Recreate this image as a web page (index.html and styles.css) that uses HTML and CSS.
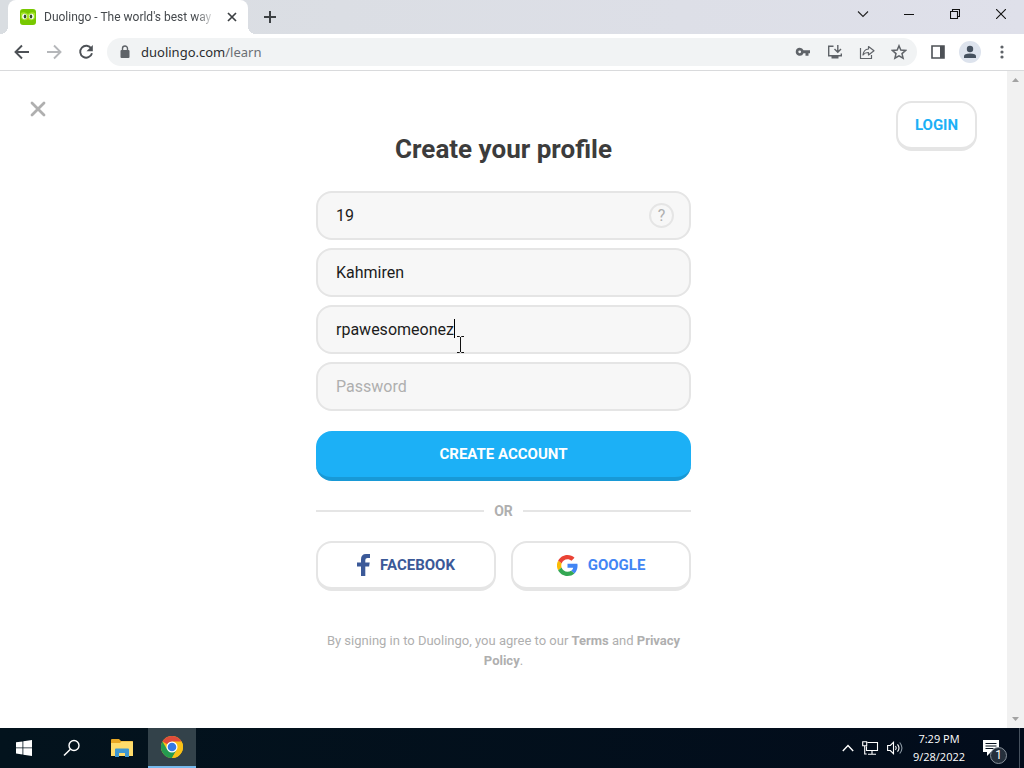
FILE: index.html
```html
<!DOCTYPE html>
<html lang="en">
<head>
<meta charset="utf-8">
<title>Duolingo - The world's best way to learn a language</title>
<link rel="stylesheet" href="styles.css">
</head>
<body>
<div class="tab-strip">
  <div class="tab">
    <svg class="favicon" width="16" height="16" viewBox="0 0 16 16"><rect width="16" height="16" rx="3" fill="#78c800"/><path d="M1 4q3.500-2 7 1 3.500-3 7-1v5q-3 4-7 1-4 3-7-1z" fill="#a5e52b"/><ellipse cx="4.500" cy="7.500" rx="2.300" ry="2.800" fill="#fff"/><ellipse cx="11.500" cy="7.500" rx="2.300" ry="2.800" fill="#fff"/><ellipse cx="5" cy="7.500" rx="1.300" ry="1.900" fill="#35502a"/><ellipse cx="11" cy="7.500" rx="1.300" ry="1.900" fill="#35502a"/><path d="M7 9.500h2L8 11z" fill="#f49000"/></svg>
    <span class="tab-title">Duolingo - The world's best way</span>
    <button class="icon-button" aria-label="Close tab"><svg width="10" height="10" viewBox="0 0 10 10"><path d="M1 1l8 8M9 1L1 9" stroke="#3c4043" stroke-width="1.700"/></svg></button>
  </div>
  <button class="icon-button new-tab" aria-label="New tab"><svg width="12" height="12" viewBox="0 0 12 12"><path d="M6 0v12M0 6h12" stroke="#3c4043" stroke-width="2"/></svg></button>
  <div class="window-controls">
    <button class="icon-button" aria-label="Search tabs"><svg width="12" height="12" viewBox="0 0 12 12"><path d="M1 3.500l5 5 5-5" fill="none" stroke="#222" stroke-width="1.100"/></svg></button>
    <button class="icon-button" aria-label="Minimize"><svg width="10" height="12" viewBox="0 0 10 12"><path d="M0 6.500h10" stroke="#111"/></svg></button>
    <button class="icon-button" aria-label="Restore"><svg width="10" height="10" viewBox="0 0 10 10"><path d="M.5 2.500h7v7h-7zM2.500 2.500v-2h7v7h-2" fill="none" stroke="#111" stroke-width="1.100"/></svg></button>
    <button class="icon-button" aria-label="Close"><svg width="10" height="10" viewBox="0 0 10 10"><path d="M0 0l10 10M10 0L0 10" stroke="#111" stroke-width="1.100"/></svg></button>
  </div>
</div>

<div class="toolbar">
  <div class="nav">
    <button class="icon-button" aria-label="Back"><svg width="16" height="16" viewBox="0 0 16 16"><path d="M15 8H2M8 1.500L1.500 8 8 14.500" fill="none" stroke="#4d5156" stroke-width="1.900"/></svg></button>
    <button class="icon-button" aria-label="Forward"><svg width="16" height="16" viewBox="0 0 16 16"><path d="M1 8h13M8 1.500L14.500 8 8 14.500" fill="none" stroke="#b5b7ba" stroke-width="1.900"/></svg></button>
    <button class="icon-button" aria-label="Reload"><svg width="16" height="16" viewBox="0 0 16 16"><path d="M13.300 4.500A6 6 0 1 0 14 9.300" fill="none" stroke="#4d5156" stroke-width="1.900"/><path d="M14.800 1v6.300H8.500z" fill="#4d5156"/></svg></button>
  </div>
  <div class="omnibox">
    <svg width="16" height="16" viewBox="0 0 16 16"><rect x="3.500" y="6" width="9" height="8" rx="1" fill="#5f6368"/><path d="M5.500 6V4.500a2.500 2.500 0 0 1 5 0V6" fill="none" stroke="#5f6368" stroke-width="1.400"/></svg>
    <span class="url">duolingo.com<span class="url-path">/learn</span></span>
    <button class="icon-button" aria-label="Passwords"><svg width="16" height="16" viewBox="0 0 16 16"><path fill-rule="evenodd" d="M4.700 3.800a4 4 0 1 0 3.800 5.400h2v2.500h3V9.200H15V6.300H8.500a4 4 0 0 0-3.800-2.500zm0 2.600a1.400 1.400 0 1 1 0 2.800 1.400 1.400 0 0 1 0-2.800z" fill="#5f6368"/></svg></button>
    <button class="icon-button" aria-label="Install"><svg width="16" height="16" viewBox="0 0 16 16"><path d="M6.500 2.200H1.700v9.600h12.600V9.500M10.800 1v7M7.500 5l3.300 3.300L14 5" fill="none" stroke="#5f6368" stroke-width="1.400"/><path d="M4.500 12h7v2.500h-7z" fill="#5f6368"/></svg></button>
    <button class="icon-button" aria-label="Share"><svg width="16" height="16" viewBox="0 0 16 16"><path d="M1.500 4v10.500h11V11M9.500 2.500L15 6.700 9.500 11V8.500Q6 8.300 4 11q.5-5.500 5.500-6z" fill="none" stroke="#5f6368" stroke-width="1.200" stroke-linejoin="round"/></svg></button>
    <button class="icon-button" aria-label="Bookmark"><svg width="16" height="16" viewBox="0 0 16 16"><path d="M8 1.800l1.800 4.300 4.700.4L11 9.600l1.100 4.600L8 11.800l-4.100 2.400L5 9.600 1.500 6.500l4.700-.4z" fill="none" stroke="#5f6368" stroke-width="1.500"/></svg></button>
  </div>
  <button class="icon-button" aria-label="Side panel"><svg width="16" height="16" viewBox="0 0 16 16"><path d="M2 2h12v12H2z" fill="none" stroke="#4d5156" stroke-width="1.600"/><path d="M10 2h4v12h-4z" fill="#4d5156"/></svg></button>
  <button class="icon-button" aria-label="Account"><svg width="22" height="22" viewBox="0 0 22 22"><circle cx="11" cy="11" r="11" fill="#dde3ed"/><circle cx="11" cy="8" r="3.200" fill="#45515f"/><path d="M5 17v-1.800q0-2.700 6-2.700t6 2.700V17z" fill="#45515f"/></svg></button>
  <button class="icon-button" aria-label="Menu"><svg width="16" height="16" viewBox="0 0 16 16"><g fill="#5f6368"><circle cx="8" cy="3" r="1.600"/><circle cx="8" cy="8" r="1.600"/><circle cx="8" cy="13" r="1.600"/></g></svg></button>
</div>

<div class="viewport">
  <main class="page">
    <button class="icon-button dismiss" aria-label="Close"><svg width="16" height="16" viewBox="0 0 16 16"><path d="M2 2l12 12M14 2L2 14" stroke="#afafaf" stroke-width="2.800" stroke-linecap="round"/></svg></button>
    <form class="signup">
      <h1 class="heading">Create your profile</h1>
      <div class="fields">
        <div class="field">
          <input class="input" type="text" value="19" aria-label="Age">
          <button class="help" type="button" aria-label="Why age is needed">?</button>
        </div>
        <div class="field"><input class="input" type="text" value="Kahmiren" aria-label="Name"></div>
        <div class="field">
          <input class="input" type="text" value="rpawesomeonez" aria-label="Email">
          <span class="caret"></span>
          <svg class="pointer" width="9" height="17" viewBox="0 0 9 17"><path d="M1 .5h2.500l1 1 1-1H8M4.500 1v15M1 16.500h2.500l1-1 1 1H8" fill="none" stroke="#111"/></svg>
        </div>
        <div class="field"><input class="input" type="password" placeholder="Password" aria-label="Password"></div>
      </div>
      <button class="button primary" type="button">CREATE ACCOUNT</button>
      <div class="divider">OR</div>
      <div class="social">
        <button class="button facebook" type="button"><svg width="13" height="22" viewBox="0 0 13 22"><path d="M4 22V12.500H0V8.500h4V5.500Q4 0 9 0h4v4h-2.500Q8.300 4 8.300 6v2.500h4.400l-.6 4H8.300V22z" fill="#3b5998"/></svg>FACEBOOK</button>
        <button class="button google" type="button"><svg width="21" height="21" viewBox="0 0 48 48"><path fill="#ea4335" d="M24 9.500c3.540 0 6.710 1.220 9.210 3.600l6.850-6.850C35.900 2.380 30.470 0 24 0 14.620 0 6.510 5.380 2.560 13.220l7.980 6.190C12.430 13.720 17.740 9.500 24 9.500z"/><path fill="#4285f4" d="M46.980 24.550c0-1.570-.15-3.090-.38-4.550H24v9.020h12.940c-.58 2.960-2.260 5.480-4.780 7.180l7.730 6c4.510-4.180 7.090-10.360 7.090-17.650z"/><path fill="#fbbc05" d="M10.530 28.590a14.500 14.500 0 0 1 0-9.180l-7.980-6.190a24 24 0 0 0 0 21.560z"/><path fill="#34a853" d="M24 48c6.480 0 11.930-2.130 15.890-5.810l-7.730-6c-2.150 1.450-4.920 2.300-8.160 2.300-6.260 0-11.570-4.220-13.470-9.910l-7.980 6.190C6.510 42.620 14.620 48 24 48z"/></svg>GOOGLE</button>
      </div>
      <p class="legal">By signing in to Duolingo, you agree to our <a href="#terms">Terms</a> and <a href="#privacy">Privacy Policy</a>.</p>
    </form>
    <button class="button login">LOGIN</button>
  </main>
  <div class="scrollbar">
    <svg width="7" height="4" viewBox="0 0 7 4"><path d="M0 4l3.500-4L7 4z" fill="#a3a3a3"/></svg>
    <svg width="7" height="4" viewBox="0 0 7 4"><path d="M0 0l3.500 4L7 0z" fill="#a3a3a3"/></svg>
  </div>
</div>

<footer class="taskbar">
  <button class="task" aria-label="Start"><svg width="16" height="16" viewBox="0 0 16 16"><path d="M0 2.300L6.500 1.400v6.100H0zM7.300 1.300L16 0v7.500H7.300zM0 8.300h6.500v6.200L0 13.600zM7.300 8.300H16V16l-8.700-1.300z" fill="#fff"/></svg></button>
  <button class="task" aria-label="Search"><svg width="18" height="18" viewBox="0 0 18 18"><circle cx="11" cy="6.500" r="5" fill="none" stroke="#fff" stroke-width="1.400"/><path d="M7.400 10.200L1 16.500" stroke="#fff" stroke-width="1.500"/></svg></button>
  <button class="task explorer" aria-label="File Explorer"><svg width="22" height="18" viewBox="0 0 22 18"><path d="M0 1q0-1 1-1h7l2 2h11q1 0 1 1v14H0z" fill="#e9a825"/><path d="M0 4h9l1.500-1.500H22V17H0z" fill="#ffdc6b"/><path d="M4 18V10.500q0-1 1-1h12q1 0 1 1V18h-4v-4H8v4z" fill="#3e97d1"/></svg></button>
  <button class="task task-active" aria-label="Google Chrome"><svg width="22" height="22" viewBox="0 0 22 22"><circle cx="11" cy="11" r="11" fill="#fbc116"/><path d="M11 11L1.470 5.500A11 11 0 0 1 20.530 5.500z" fill="#df4b3b"/><path d="M1.470 5.500A11 11 0 0 0 11 22l4.700-8.200L11 11l-4.700 2.700z" fill="#259b50"/><path d="M11 5.500h9.530A11 11 0 0 1 11 22l4.800-8.200z" fill="#fbc116"/><circle cx="11" cy="11" r="5.500" fill="#fff"/><circle cx="11" cy="11" r="4.300" fill="#3478e5"/></svg></button>
  <div class="tray">
    <svg width="12" height="8" viewBox="0 0 12 8"><path d="M.8 7L6 1.500 11.200 7" fill="none" stroke="#fff" stroke-width="1.400"/></svg>
    <svg width="17" height="14" viewBox="0 0 17 14"><path d="M5.500 1.500h10v8h-11V5.500M10 9.500v3.500M6 13.300h8M.7.700h4v4h-4zM2.700 5v8h2" fill="none" stroke="#fff" stroke-width="1.100"/></svg>
    <svg width="16" height="14" viewBox="0 0 16 14"><path d="M.6 4.500h2.700L6.500 1.300v11.400L3.300 9.500H.6z" fill="none" stroke="#fff" stroke-width="1.100"/><path d="M8.500 5q1.500 2 0 4M10.500 3.300q3 3.700 0 7.400" fill="none" stroke="#fff" stroke-width="1.100"/><path d="M12.700 1.500q4.500 5.500 0 11" fill="none" stroke="#8b98a3" stroke-width="1.100"/></svg>
    <time class="clock">7:29 PM<br>9/28/2022</time>
    <button class="notifications" aria-label="Notifications"><svg width="16" height="16" viewBox="0 0 16 16"><path d="M0 0h16v12H8l-4 4v-4H0z" fill="#fff"/><path d="M2.500 3.500h11M2.500 6h11M2.500 8.500h8" stroke="#07121f"/></svg><span class="badge">1</span></button>
  </div>
</footer>
</body>
</html>
```
FILE: styles.css
```css
* { box-sizing: border-box; }

body {
  margin: 0;
  min-height: 100vh;
  display: flex;
  flex-direction: column;
  background: #fff;
  font-family: Roboto, "Liberation Sans", sans-serif;
}

button {
  border: 0;
  padding: 0;
  background: none;
  font-family: inherit;
  cursor: pointer;
}

svg { display: block; flex: none; }

.icon-button {
  display: flex;
  align-items: center;
  justify-content: center;
  min-width: 16px;
  min-height: 16px;
}

/* Browser frame */
.tab-strip {
  display: flex;
  height: 34px;
  padding-left: 8px;
  background: linear-gradient(90deg, #d9dde1, #dfe0ea);
}

.tab {
  position: relative;
  display: flex;
  align-items: center;
  gap: 8px;
  width: 240px;
  padding: 0 8px 0 12px;
  border-radius: 8px 8px 0 0;
  background: #fff;
}

.tab::before,
.tab::after {
  content: "";
  position: absolute;
  bottom: 0;
  width: 8px;
  height: 8px;
}

.tab::before {
  left: -8px;
  background: radial-gradient(circle at 0 0, transparent 8px, #fff 8px);
}

.tab::after {
  right: -8px;
  background: radial-gradient(circle at 100% 0, transparent 8px, #fff 8px);
}

.tab-title {
  flex: 1;
  white-space: nowrap;
  font-size: 12px;
  color: #45494d;
  -webkit-mask-image: linear-gradient(90deg, #000 88%, transparent);
  mask-image: linear-gradient(90deg, #000 88%, transparent);
}

.new-tab { width: 44px; }

.window-controls {
  display: flex;
  margin-left: auto;
  padding-bottom: 6px;
}

.window-controls .icon-button { width: 46px; }

.toolbar {
  display: flex;
  align-items: center;
  gap: 13px;
  height: 37px;
  padding: 0 14px;
  border-bottom: 1px solid #d9dadc;
}

.nav { display: flex; gap: 16px; }

.omnibox {
  flex: 1;
  display: flex;
  align-items: center;
  gap: 16px;
  height: 28px;
  padding: 0 10px;
  border-radius: 14px;
  background: #f1f3f4;
}

.url {
  flex: 1;
  margin-left: -8px;
  font-family: "Noto Sans", sans-serif;
  font-size: 13px;
  color: #2b2d30;
}

.url-path { color: #6b6f74; }

/* Page */
.viewport { flex: 1; display: flex; }

.page {
  flex: 1;
  display: grid;
  grid-template-columns: 1fr minmax(0, 375px) 1fr;
  align-items: start;
  padding: 30px 30px 0;
}

.dismiss { justify-self: start; }

.scrollbar {
  display: flex;
  flex-direction: column;
  justify-content: space-between;
  align-items: center;
  width: 17px;
  padding: 7px 0;
  background: #f1f1f1;
}

.heading {
  margin: 33px 0 27px;
  font-size: 26px;
  line-height: 30px;
  font-weight: 700;
  text-align: center;
  color: #3c3c3c;
}

.fields {
  display: flex;
  flex-direction: column;
  gap: 8px;
  margin-bottom: 20px;
}

.field { position: relative; }

.input {
  display: block;
  width: 100%;
  height: 49px;
  padding: 0 18px;
  border: 2px solid #e5e5e5;
  border-radius: 16px;
  background: #f7f7f7;
  font: 16px Roboto, sans-serif;
  color: #1c1c1c;
}

.input::placeholder { color: #afafaf; }

.help {
  position: absolute;
  top: 12px;
  right: 17px;
  width: 25px;
  height: 25px;
  border: 2px solid #e5e5e5;
  border-radius: 50%;
  font-size: 16px;
  line-height: 20px;
  color: #afafaf;
}

.caret {
  position: absolute;
  top: 14px;
  left: 138px;
  width: 1px;
  height: 19px;
  background: #000;
}

.pointer {
  position: absolute;
  top: 31px;
  left: 140px;
}

.button {
  display: flex;
  align-items: center;
  justify-content: center;
  gap: 10px;
  height: 50px;
  border: 2px solid #e5e5e5;
  border-bottom-width: 4px;
  border-radius: 16px;
  background: #fff;
  font-size: 15px;
  font-weight: 700;
}

.primary {
  width: 100%;
  border: 0;
  border-bottom: 4px solid #1899d6;
  background: #1cb0f6;
  color: #fff;
}

.divider {
  display: flex;
  align-items: center;
  gap: 10px;
  margin: 20px 0;
  font-size: 14px;
  line-height: 20px;
  font-weight: 700;
  color: #afafaf;
}

.divider::before,
.divider::after {
  content: "";
  flex: 1;
  height: 2px;
  background: #e5e5e5;
}

.social {
  display: grid;
  grid-template-columns: 1fr 1fr;
  gap: 15px;
}

.facebook { color: #3b5998; }

.google { color: #4285f4; }

.login {
  justify-self: end;
  width: 81px;
  color: #1cb0f6;
}

.legal {
  margin: 40px 0 20px;
  font-size: 13px;
  line-height: 20px;
  text-align: center;
  color: #afafaf;
}

.legal a {
  font-weight: 700;
  color: inherit;
  text-decoration: none;
}

/* Taskbar */
.taskbar {
  display: flex;
  height: 40px;
  background: linear-gradient(90deg, #03131d, #020c1b);
  color: #fff;
}

.task {
  display: flex;
  align-items: center;
  justify-content: center;
  width: 48px;
}

.explorer { width: 52px; }

.task-active {
  border-bottom: 2px solid #76b9ed;
  background: #33424a;
}

.tray {
  display: flex;
  align-items: center;
  gap: 8px;
  margin-left: auto;
  margin-right: 4px;
  padding-right: 20px;
  border-right: 1px solid #46515e;
}

.clock {
  width: 56px;
  font-family: "Open Sans", sans-serif;
  font-size: 11px;
  line-height: 18px;
  text-align: center;
  white-space: nowrap;
}

.notifications {
  position: relative;
  margin-left: 8px;
}

.badge {
  position: absolute;
  top: 7px;
  left: 7px;
  width: 17px;
  height: 17px;
  border: 1px solid #87909a;
  border-radius: 50%;
  background: #252f3b;
  font-size: 12px;
  line-height: 15px;
  color: #fff;
}
```
